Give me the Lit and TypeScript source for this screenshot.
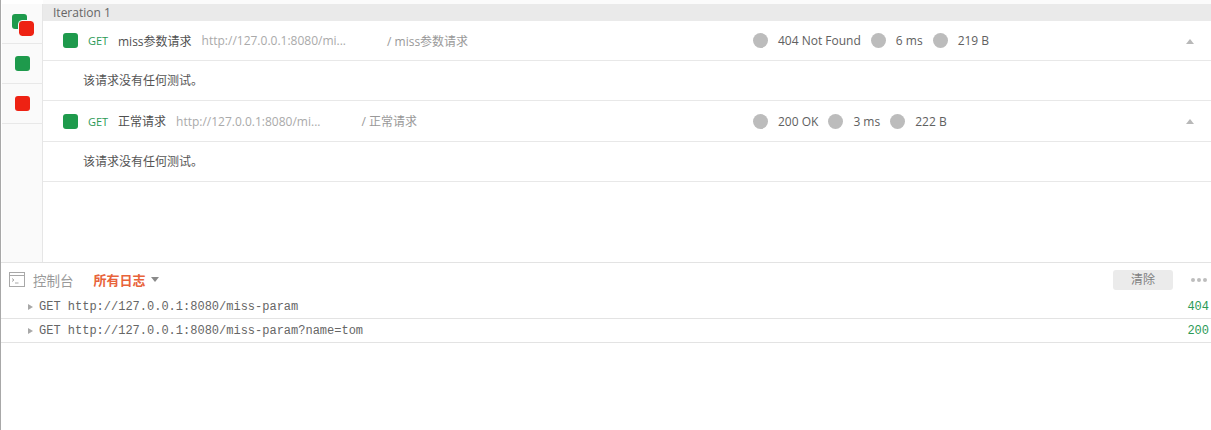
import { LitElement, html, css } from "lit";
import { customElement } from "lit/decorators.js";

const requests = [
  { name: "miss参数请求", url: "http://127.0.0.1:8080/mi...", crumb: "/ miss参数请求", status: "404 Not Found", time: "6 ms", size: "219 B" },
  { name: "正常请求", url: "http://127.0.0.1:8080/mi...", crumb: "/ 正常请求", status: "200 OK", time: "3 ms", size: "222 B" },
];

@customElement("app-root")
export class AppRoot extends LitElement {
  static styles = css`
    :host {
      display: flex;
      flex-direction: column;
      width: 1211px;
      height: 430px;
      overflow: hidden;
      background: #fff;
      font-family: "Open Sans", "Noto Sans CJK SC", sans-serif;
      font-size: 12px;
      color: #505050;
      box-sizing: border-box;
      border-left: 1px solid #a8a8a8;
    }
    .top { display: flex; height: 262px; flex: none; border-bottom: 1px solid #e3e3e3; box-sizing: content-box; }
    .side {
      width: 40px;
      margin-top: 4px;
      margin-left: 1px;
      background: #fafafa;
      border-right: 1px solid #e6e6e6;
      flex: none;
    }
    .cell {
      height: 39px;
      margin-right: -1px;
      border-bottom: 1px solid #e8e8e8;
      display: flex;
      align-items: center;
      justify-content: center;
    }
    .sq { width: 15px; height: 15px; border-radius: 3px; flex: none; }
    .green { background: #1e9a4c; }
    .red { background: #ee2213; }
    .combo { position: relative; width: 22px; height: 22px; margin: 3px 0 0 1px; }
    .combo .a { position: absolute; left: 0; top: 0; }
    .combo .b { position: absolute; left: 7px; top: 7px; outline: 1px solid #fafafa; }
    .main { flex: 1; min-width: 0; }
    .iter {
      height: 17px;
      line-height: 17px;
      background: #eaeaea;
      border-top: 4px solid #fbfbfb;
      padding-left: 10px;
      color: #666;
      font-size: 12px;
    }
    .req {
      height: 39px;
      display: flex;
      align-items: center;
      padding-left: 20px;
      border-bottom: 1px solid #e8e8e8;
      position: relative;
    }
    .req + .test + .req { height: 40px; }
    .method { color: #2c9a56; font-size: 11px; margin-left: 10px; width: 30px; flex: none; }
    .name { color: #505050; margin-right: 10px; white-space: nowrap; }
    .url { color: #aaa; white-space: nowrap; }
    .crumb { color: #999; white-space: nowrap; margin-left: 41px; }
    .stats {
      position: absolute;
      left: 710px;
      top: 0;
      bottom: 0;
      display: flex;
      align-items: center;
    }
    .dot { width: 15px; height: 15px; border-radius: 50%; background: #bcbcbc; flex: none; margin-right: 10px; }
    .stat { margin-right: 10px; white-space: nowrap; color: #606060; }
    .tri {
      position: absolute;
      right: 17px;
      top: 18px;
      width: 0;
      height: 0;
      border-left: 4px solid transparent;
      border-right: 4px solid transparent;
      border-bottom: 5px solid #b8b8b8;
    }
    .test {
      height: 39px;
      line-height: 40px;
      padding-left: 40px;
      border-bottom: 1px solid #e8e8e8;
      color: #555;
      font-size: 12px;
    }
    .console { flex: 1; min-height: 0; }
    .chead {
      height: 33px;
      display: flex;
      align-items: center;
      padding-left: 8px;
      padding-right: 3px;
    }
    .term { flex: none; display: block; }
    .ctitle { color: #9a9a9a; font-size: 13.5px; margin-left: 8px; }
    .all { color: #e8633a; font-size: 13px; font-weight: 700; margin-left: 20px; }
    .drop {
      width: 0;
      height: 0;
      margin-left: 5px;
      border-left: 4px solid transparent;
      border-right: 4px solid transparent;
      border-top: 5px solid #8a8a8a;
    }
    .spacer { flex: 1; }
    .clear {
      width: 60px;
      height: 20px;
      line-height: 20px;
      border-radius: 3px;
      background: #ebebeb;
      color: #808080;
      font-size: 12px;
      text-align: center;
      margin-right: 18px;
    }
    .more { display: flex; gap: 2px; margin-right: 1px; }
    .more i { width: 4px; height: 4px; border-radius: 50%; background: #bdbdbd; display: block; }
    .log {
      height: 23px;
      border-bottom: 1px solid #e3e3e3;
      display: flex;
      align-items: center;
      padding-left: 28px;
      padding-right: 2px;
      font-family: "Liberation Mono", monospace;
      font-size: 12px;
      color: #666;
      margin-left: -1px;
    }
    .log.first { height: 22px; }
    .arrow {
      width: 0;
      height: 0;
      border-top: 3.5px solid transparent;
      border-bottom: 3.5px solid transparent;
      border-left: 5px solid #a8a8a8;
      margin-right: 6px;
    }
    .code { color: #2c9a56; margin-left: auto; }
  `;

  render() {
    return html`
      <div class="top">
        <div class="side">
          <div class="cell">
            <div class="combo">
              <div class="sq green a"></div>
              <div class="sq red b"></div>
            </div>
          </div>
          <div class="cell"><div class="sq green"></div></div>
          <div class="cell"><div class="sq red"></div></div>
        </div>
        <div class="main">
          <div class="iter">Iteration 1</div>
          ${requests.map(
            (r) => html`
              <div class="req">
                <div class="sq green"></div>
                <span class="method">GET</span>
                <span class="name">${r.name}</span>
                <span class="url">${r.url}</span>
                <span class="crumb">${r.crumb}</span>
                <div class="stats">
                  <div class="dot"></div><span class="stat">${r.status}</span>
                  <div class="dot"></div><span class="stat">${r.time}</span>
                  <div class="dot"></div><span class="stat">${r.size}</span>
                </div>
                <div class="tri"></div>
              </div>
              <div class="test">该请求没有任何测试。</div>
            `
          )}
        </div>
      </div>
      <div class="console">
        <div class="chead">
          <svg class="term" width="16" height="15" viewBox="0 0 16 15" fill="none" stroke="#a8a8a8" stroke-width="1">
            <rect x="0.5" y="0.5" width="15" height="14"></rect>
            <path d="M0.5 3.5H15.5M3 6.5l2 1.5L3 9.5M6 11h3.5"></path>
          </svg>
          <span class="ctitle">控制台</span>
          <span class="all">所有日志</span>
          <div class="drop"></div>
          <div class="spacer"></div>
          <div class="clear">清除</div>
          <div class="more"><i></i><i></i><i></i></div>
        </div>
        <div class="log first"><div class="arrow"></div><span>GET http://127.0.0.1:8080/miss-param</span><span class="code">404</span></div>
        <div class="log"><div class="arrow"></div><span>GET http://127.0.0.1:8080/miss-param?name=tom</span><span class="code">200</span></div>
      </div>
    `;
  }
}
